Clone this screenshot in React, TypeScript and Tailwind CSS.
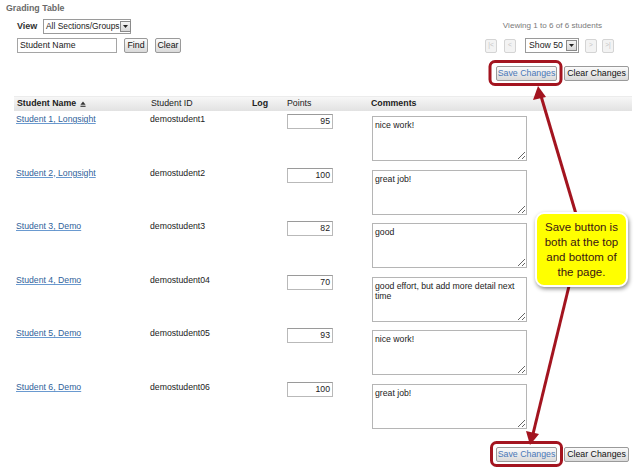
import React from "react";

const students = [
  { name: "Student 1, Longsight", id: "demostudent1", points: "95", comment: "nice work!" },
  { name: "Student 2, Longsight", id: "demostudent2", points: "100", comment: "great job!" },
  { name: "Student 3, Demo", id: "demostudent3", points: "82", comment: "good" },
  { name: "Student 4, Demo", id: "demostudent04", points: "70", comment: "good effort, but add more detail next time" },
  { name: "Student 5, Demo", id: "demostudent05", points: "93", comment: "nice work!" },
  { name: "Student 6, Demo", id: "demostudent06", points: "100", comment: "great job!" },
];

const btn =
  "h-[15px] flex items-center justify-center whitespace-nowrap rounded-[2px] border border-[#9a9a9a] bg-gradient-to-b from-[#fbfbfb] to-[#dadada] text-[8.8px] leading-none";

const DropArrow = () => (
  <div className="shrink-0 w-[11px] h-[11px] border border-[#8a8a8a] bg-gradient-to-b from-[#f4f4f4] to-[#d8d8d8] flex items-center justify-center">
    <svg width="5" height="3" viewBox="0 0 5 3">
      <path d="M0 0h5L2.5 3z" fill="#222" />
    </svg>
  </div>
);

const PagerBtn = ({ label, className = "" }: { label: string; className?: string }) => (
  <div
    className={`w-[12px] h-[14px] rounded-[2px] border border-[#d4d4d4] bg-[#f3f3f3] text-[#c4c4c4] text-[6.5px] flex items-center justify-center leading-none ${className}`}
  >
    {label}
  </div>
);

const SaveRow = ({ className }: { className: string }) => (
  <div className={`flex justify-end gap-[7px] pr-[11px] ${className}`}>
    <div className={`${btn} w-[61px] text-[#4a78b8] from-[#f2f5f9] to-[#d6dce4]`}>Save Changes</div>
    <div className={`${btn} w-[65px] text-[#111]`}>Clear Changes</div>
  </div>
);

export default function App() {
  return (
    <div className="relative w-[640px] h-[471px] overflow-hidden bg-white text-[8.7px] text-[#222] font-['Liberation_Sans',Arial,sans-serif]">
      <div className="h-[16px] pl-[6px] pt-[1px] font-bold text-[#6a6a6a] leading-[14px] text-[8.8px]">Grading Table</div>

      <div className="flex justify-between mt-[3px]">
        <div className="pl-[17px]">
          <div className="flex items-center h-[15px]">
            <span className="font-bold text-[#333] w-[26px] text-[9px]">View</span>
            <div className="flex items-center justify-between w-[88px] h-[15px] border border-[#9a9a9a] pl-[2px] pr-[1px] whitespace-nowrap">
              <span className="leading-none text-[8.4px]">All Sections/Groups</span>
              <DropArrow />
            </div>
          </div>
          <div className="flex items-center mt-[4px] h-[15px]">
            <div className="w-[100px] h-[15px] border border-[#a5a5a5] pl-[2px] flex items-center leading-none">
              Student Name
            </div>
            <div className={`${btn} ml-[7px] w-[24px] text-[#111]`}>Find</div>
            <div className={`${btn} ml-[7px] w-[26px] text-[#111]`}>Clear</div>
          </div>
        </div>

        <div className="pr-[26px] flex flex-col items-center">
          <div className="h-[15px] flex items-center text-[8.1px] text-[#7a7a7a] ml-[6px]">
            Viewing 1 to 6 of 6 students
          </div>
          <div className="flex items-center mt-[4px]">
            <PagerBtn label="|<" />
            <PagerBtn label="<" className="ml-[7px]" />
            <div className="flex items-center justify-between w-[54px] h-[15px] border border-[#9a9a9a] pl-[3px] pr-[1px] ml-[9px] whitespace-nowrap">
              <span className="leading-none">Show 50</span>
              <DropArrow />
            </div>
            <PagerBtn label=">" className="ml-[6px]" />
            <PagerBtn label=">|" className="ml-[5px]" />
          </div>
        </div>
      </div>

      <SaveRow className="mt-[13px]" />

      <div className="mt-[15px] ml-[14px] w-[618px]">
        <div className="grid grid-cols-[134px_102px_35px_84px_1fr] h-[15px] items-center bg-gradient-to-b from-[#f7f7f7] to-[#e2e2e2] border-t border-[#ececec] text-[#222] text-[8.8px]">
          <div className="pl-[3px] font-bold flex items-center gap-[4px]">
            Student Name
            <svg width="6" height="6" viewBox="0 0 7 7">
              <path d="M3.5 0.5L6.5 4.5H0.5z" fill="#333" />
              <rect x="0.5" y="5.5" width="6" height="1.3" fill="#333" />
            </svg>
          </div>
          <div className="pl-[3px]">Student ID</div>
          <div className="pl-[2px] font-bold">Log</div>
          <div className="pl-[2px]">Points</div>
          <div className="pl-[2px] font-bold">Comments</div>
        </div>

        {students.map((s) => (
          <div key={s.id} className="grid grid-cols-[134px_102px_35px_84px_1fr] h-[53.6px] items-start">
            <div className="pl-[2px] pt-[2px] text-[#2f5f9a] underline decoration-[#6a9ad0]">{s.name}</div>
            <div className="pl-[2px] pt-[2px]">{s.id}</div>
            <div />
            <div className="pl-[2px] pt-[3px]">
              <div className="w-[46px] h-[15px] border border-[#b9b9b9] border-t-[#9a9a9a] text-right pr-[2px] leading-[13px]">
                {s.points}
              </div>
            </div>
            <div className="pl-[3px] pt-[5px]">
              <textarea
                readOnly
                defaultValue={s.comment}
                className="block w-[155px] h-[45px] resize-y border border-[#b5b5b5] px-[2px] py-[3px] text-[8.7px] leading-[10px] text-[#222] outline-none font-['Liberation_Sans',Arial,sans-serif]"
              />
            </div>
          </div>
        ))}
      </div>

      <SaveRow className="mt-[14px]" />

      <svg className="absolute left-0 top-0 pointer-events-none" width="640" height="471" viewBox="0 0 640 471">
        <rect x="490" y="61.5" width="71" height="23" rx="5" fill="none" stroke="#a3141f" strokeWidth="3" />
        <rect x="491.5" y="442.5" width="70" height="23" rx="5" fill="none" stroke="#a3141f" strokeWidth="3" />
        <line x1="576" y1="214" x2="541" y2="96" stroke="#a3141f" strokeWidth="3" />
        <path d="M538 86L533 100L546 97z" fill="#a3141f" />
        <line x1="569" y1="286" x2="533" y2="434" stroke="#a3141f" strokeWidth="3" />
        <path d="M530 445L526 431L539 434z" fill="#a3141f" />
      </svg>

      <div className="absolute left-[535px] top-[212px] w-[93px] h-[75px] rounded-[9px] border-2 border-white bg-[#ffff00] shadow-[1px_2px_4px_rgba(0,0,0,0.45)] flex items-center justify-center text-center text-[11.5px] leading-[15px] text-[#3a1414]">
        <div>
          Save button is
          <br />
          both at the top
          <br />
          and bottom of
          <br />
          the page.
        </div>
      </div>
    </div>
  );
}
